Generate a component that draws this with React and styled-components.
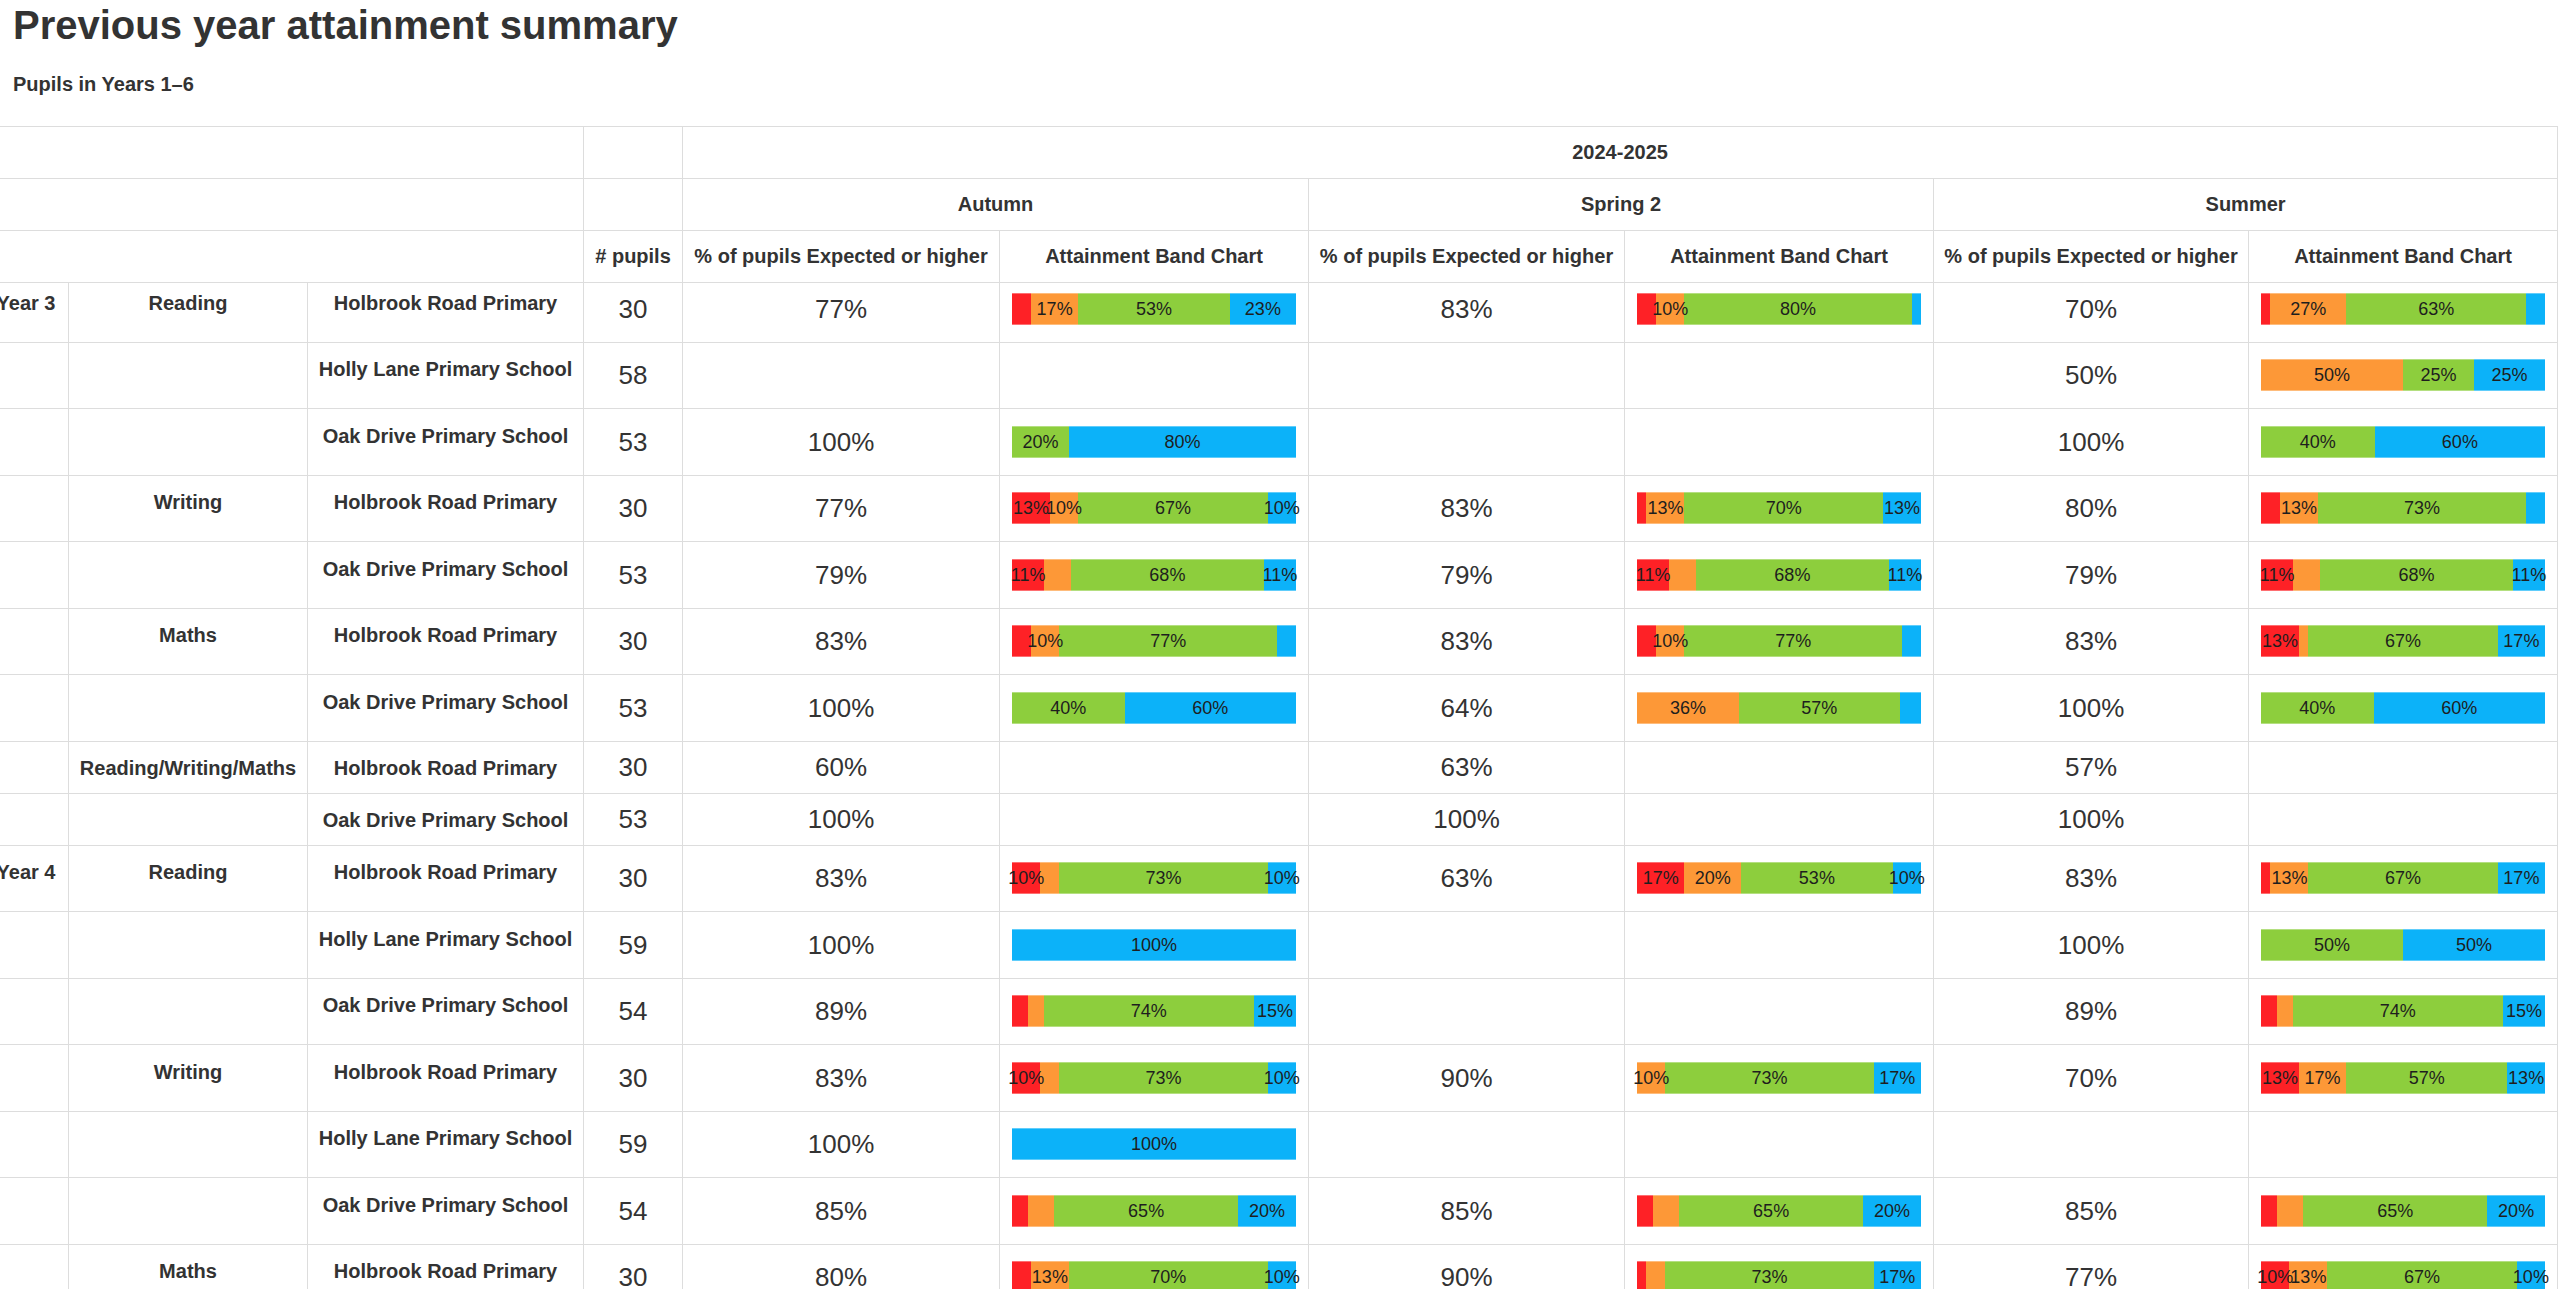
import React from "react";
import styled, { createGlobalStyle, css } from "styled-components";

const GlobalStyle = createGlobalStyle`
  html, body { margin: 0; padding: 0; background: #ffffff; }
  body {
    font-family: "Liberation Sans", Arial, Helvetica, sans-serif;
    color: #333333;
  }
`;

const BAND_COLORS = ["#fe2126", "#fd9837", "#8dce3d", "#0cb2f9"];
const COL_WIDTHS = [85, 239, 276, 99, 317, 309, 316, 309, 315, 309];

const Page = styled.main`
  display: flex;
  flex-direction: column;
  width: 2560px;
`;

const Heading = styled.header`
  display: flex;
  flex-direction: column;
  padding: 2px 13px 0;
`;

const Title = styled.h1`
  margin: 0;
  font-size: 40px;
  line-height: 46px;
  font-weight: 700;
  color: #333333;
`;

const Subtitle = styled.h2`
  margin: 24.5px 0 0;
  font-size: 20px;
  line-height: 23px;
  font-weight: 700;
  color: #333333;
`;

const Viewport = styled.div`
  margin-top: 30.5px;
  overflow: hidden;
`;

const Table = styled.table`
  margin-left: -17px;
  width: 2574px;
  table-layout: fixed;
  border-collapse: collapse;
`;

const Col = styled.col`
  width: ${(p) => p.$w}px;
`;

const HeadCell = styled.th`
  border: 1px solid #dddddd;
  padding: 14px 8px;
  font-size: 20px;
  line-height: 23px;
  font-weight: 700;
  text-align: center;
  vertical-align: middle;
  color: #333333;
  white-space: nowrap;
`;

const clipTop = (base) => css`
  padding-top: ${(p) => (p.$clip ? base - 7 : base)}px;
`;

const LabelCell = styled.td`
  border: 1px solid #dddddd;
  ${clipTop(15.5)}
  padding-bottom: 9px;
  padding-left: 6px;
  padding-right: 6px;
  font-size: 20px;
  line-height: 23px;
  font-weight: 700;
  text-align: center;
  vertical-align: top;
  color: #333333;
  white-space: nowrap;
`;

const NumberCell = styled.td`
  border: 1px solid #dddddd;
  ${clipTop(11.5)}
  padding-bottom: 11.5px;
  padding-left: 8px;
  padding-right: 8px;
  font-size: 26px;
  line-height: 28px;
  font-weight: 400;
  text-align: center;
  vertical-align: middle;
  color: #333333;
`;

const ChartCell = styled.td`
  border: 1px solid #dddddd;
  ${clipTop(16.75)}
  padding-bottom: 16.75px;
  padding-left: 12px;
  padding-right: 12px;
  vertical-align: top;
`;

const Bar = styled.div`
  display: flex;
  width: 100%;
  height: 32px;
`;

const Segment = styled.div`
  position: relative;
  display: flex;
  align-items: center;
  justify-content: center;
  flex: none;
  height: 100%;
  background: ${(p) => p.$color};
  box-shadow: inset 0 1px 0 rgba(255, 255, 255, 0.35), inset 0 -1px 0 rgba(255, 255, 255, 0.35);
`;

const SegmentLabel = styled.span`
  position: relative;
  z-index: 1;
  font-size: 18px;
  line-height: 20px;
  color: #1e1e1e;
  white-space: nowrap;
`;

const DATA = [
  {
    year: "Year 3", subject: "Reading", school: "Holbrook Road Primary", n: "30",
    terms: [
      ["77%", [6.67, 16.67, 53.33, 23.33]],
      ["83%", [6.67, 10, 80, 3.33]],
      ["70%", [3.33, 26.67, 63.33, 6.67]],
    ],
  },
  {
    school: "Holly Lane Primary School", n: "58",
    terms: [["", null], ["", null], ["50%", [0, 50, 25, 25]]],
  },
  {
    school: "Oak Drive Primary School", n: "53",
    terms: [["100%", [0, 0, 20, 80]], ["", null], ["100%", [0, 0, 40, 60]]],
  },
  {
    subject: "Writing", school: "Holbrook Road Primary", n: "30",
    terms: [
      ["77%", [13.33, 10, 66.67, 10]],
      ["83%", [3.33, 13.33, 70, 13.33]],
      ["80%", [6.67, 13.33, 73.33, 6.67]],
    ],
  },
  {
    school: "Oak Drive Primary School", n: "53",
    terms: [
      ["79%", [11.32, 9.43, 67.92, 11.32]],
      ["79%", [11.32, 9.43, 67.92, 11.32]],
      ["79%", [11.32, 9.43, 67.92, 11.32]],
    ],
  },
  {
    subject: "Maths", school: "Holbrook Road Primary", n: "30",
    terms: [
      ["83%", [6.67, 10, 76.67, 6.67]],
      ["83%", [6.67, 10, 76.67, 6.67]],
      ["83%", [13.33, 3.33, 66.67, 16.67]],
    ],
  },
  {
    school: "Oak Drive Primary School", n: "53",
    terms: [
      ["100%", [0, 0, 39.62, 60.38]],
      ["64%", [0, 35.85, 56.6, 7.55]],
      ["100%", [0, 0, 39.62, 60.38]],
    ],
  },
  {
    subject: "Reading/Writing/Maths", school: "Holbrook Road Primary", n: "30",
    terms: [["60%", null], ["63%", null], ["57%", null]],
  },
  {
    school: "Oak Drive Primary School", n: "53",
    terms: [["100%", null], ["100%", null], ["100%", null]],
  },
  {
    year: "Year 4", subject: "Reading", school: "Holbrook Road Primary", n: "30",
    terms: [
      ["83%", [10, 6.67, 73.33, 10]],
      ["63%", [16.67, 20, 53.33, 10]],
      ["83%", [3.33, 13.33, 66.67, 16.67]],
    ],
  },
  {
    school: "Holly Lane Primary School", n: "59",
    terms: [["100%", [0, 0, 0, 100]], ["", null], ["100%", [0, 0, 50, 50]]],
  },
  {
    school: "Oak Drive Primary School", n: "54",
    terms: [
      ["89%", [5.56, 5.56, 74.07, 14.81]],
      ["", null],
      ["89%", [5.56, 5.56, 74.07, 14.81]],
    ],
  },
  {
    subject: "Writing", school: "Holbrook Road Primary", n: "30",
    terms: [
      ["83%", [10, 6.67, 73.33, 10]],
      ["90%", [0, 10, 73.33, 16.67]],
      ["70%", [13.33, 16.67, 56.67, 13.33]],
    ],
  },
  {
    school: "Holly Lane Primary School", n: "59",
    terms: [["100%", [0, 0, 0, 100]], ["", null], ["", null]],
  },
  {
    school: "Oak Drive Primary School", n: "54",
    terms: [
      ["85%", [5.56, 9.26, 64.81, 20.37]],
      ["85%", [5.56, 9.26, 64.81, 20.37]],
      ["85%", [5.56, 9.26, 64.81, 20.37]],
    ],
  },
  {
    subject: "Maths", school: "Holbrook Road Primary", n: "30",
    terms: [
      ["80%", [6.67, 13.33, 70, 10]],
      ["90%", [3.33, 6.67, 73.33, 16.67]],
      ["77%", [10, 13.33, 66.67, 10]],
    ],
  },
];

function BandChart({ bands }) {
  return (
    <Bar>
      {bands.map((v, i) =>
        v > 0 ? (
          <Segment key={i} $color={BAND_COLORS[i]} style={{ width: `${v}%` }}>
            {Math.round(v) >= 10 && <SegmentLabel>{Math.round(v)}%</SegmentLabel>}
          </Segment>
        ) : null
      )}
    </Bar>
  );
}

function DataRow({ row, clip }) {
  return (
    <tr>
      <LabelCell $clip={clip}>{row.year || ""}</LabelCell>
      <LabelCell $clip={clip}>{row.subject || ""}</LabelCell>
      <LabelCell $clip={clip}>{row.school}</LabelCell>
      <NumberCell $clip={clip}>{row.n}</NumberCell>
      {row.terms.map(([pct, bands], i) => (
        <React.Fragment key={i}>
          <NumberCell $clip={clip}>{pct}</NumberCell>
          <ChartCell $clip={clip}>{bands && <BandChart bands={bands} />}</ChartCell>
        </React.Fragment>
      ))}
    </tr>
  );
}

export default function App() {
  return (
    <>
      <GlobalStyle />
      <Page>
        <Heading>
          <Title>Previous year attainment summary</Title>
          <Subtitle>Pupils in Years 1–6</Subtitle>
        </Heading>
        <Viewport>
          <Table>
            <colgroup>
              {COL_WIDTHS.map((w, i) => (
                <Col key={i} $w={w} />
              ))}
            </colgroup>
            <thead>
              <tr>
                <HeadCell colSpan={3} />
                <HeadCell />
                <HeadCell colSpan={6}>2024-2025</HeadCell>
              </tr>
              <tr>
                <HeadCell colSpan={3} />
                <HeadCell />
                <HeadCell colSpan={2}>Autumn</HeadCell>
                <HeadCell colSpan={2}>Spring 2</HeadCell>
                <HeadCell colSpan={2}>Summer</HeadCell>
              </tr>
              <tr>
                <HeadCell colSpan={3} />
                <HeadCell># pupils</HeadCell>
                <HeadCell>% of pupils Expected or higher</HeadCell>
                <HeadCell>Attainment Band Chart</HeadCell>
                <HeadCell>% of pupils Expected or higher</HeadCell>
                <HeadCell>Attainment Band Chart</HeadCell>
                <HeadCell>% of pupils Expected or higher</HeadCell>
                <HeadCell>Attainment Band Chart</HeadCell>
              </tr>
            </thead>
            <tbody>
              {DATA.map((row, i) => (
                <DataRow key={i} row={row} clip={i === 0} />
              ))}
            </tbody>
          </Table>
        </Viewport>
      </Page>
    </>
  );
}
